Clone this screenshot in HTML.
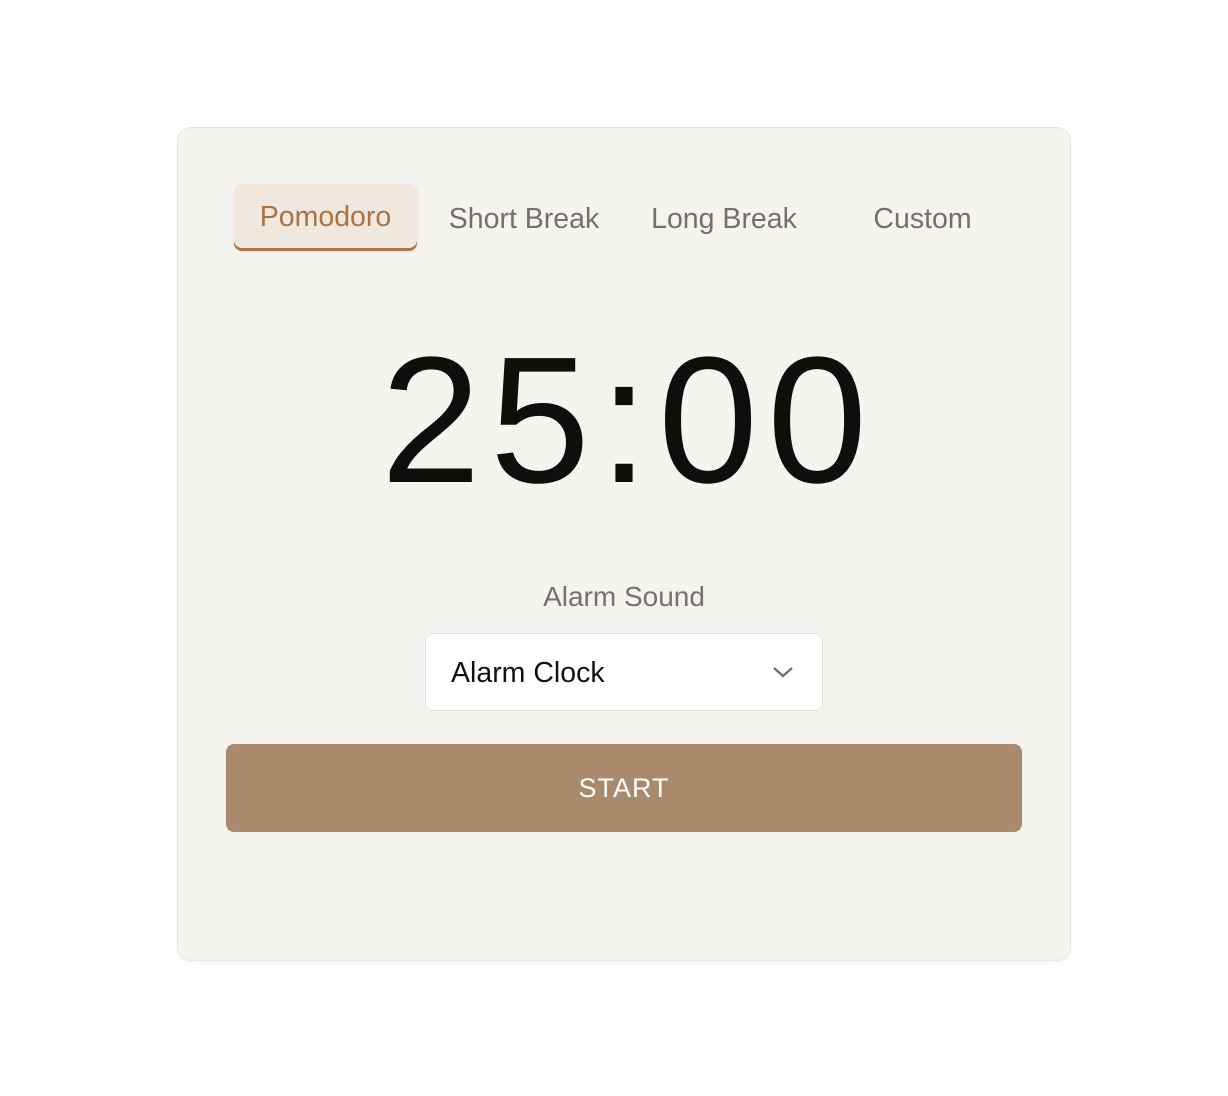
<!DOCTYPE html>
<html><head><style>
body{margin:0;background:#fff;width:1228px;height:1096px;position:relative;font-family:"Liberation Sans",sans-serif;}
.card{position:absolute;left:177px;top:127px;width:892px;height:832px;background:#f6f4f1;border:1px solid #e8e4df;border-radius:14px;box-shadow:0 2px 6px rgba(0,0,0,0.04);}
.tab{position:absolute;top:184px;height:67px;line-height:70px;font-size:28.5px;color:#76706b;text-align:center;}
.active{left:234px;width:183px;background:#f0e8df;border-radius:8px;color:#a97443;box-shadow:inset 0 -3px 0 #a97443,0 1px 3px rgba(0,0,0,0.08);line-height:66px;}
.time{position:absolute;left:0;width:1257px;top:311px;text-align:center;font-size:180px;line-height:220px;color:#0f0e0c;letter-spacing:9px;}
.label{position:absolute;left:0;width:1248px;top:581px;text-align:center;font-size:28px;color:#77716c;}
.sel{position:absolute;left:425px;top:633px;width:396px;height:76px;background:#fff;border:1px solid #e3e0dc;border-radius:8px;}
.sel span{position:absolute;left:25px;top:23px;font-size:28.5px;color:#111;}
.btn{position:absolute;left:226px;top:744px;width:796px;height:88px;background:#a98a6d;border-radius:8px;color:#fff;text-align:center;line-height:88px;font-size:27px;letter-spacing:1px;}
</style></head><body>
<div class="card"></div>
<div class="tab active">Pomodoro</div>
<div class="tab" style="left:440px;width:168px">Short Break</div>
<div class="tab" style="left:640px;width:168px">Long Break</div>
<div class="tab" style="left:850px;width:145px">Custom</div>
<div class="time">25:00</div>
<div class="label">Alarm Sound</div>
<div class="sel"><span>Alarm Clock</span>
<svg style="position:absolute;left:346px;top:31px" width="22" height="14" viewBox="0 0 22 14"><path d="M2 3 L11 11 L20 3" fill="none" stroke="#6f6b67" stroke-width="2.2"/></svg></div>
<div class="btn">START</div>
</body></html>
